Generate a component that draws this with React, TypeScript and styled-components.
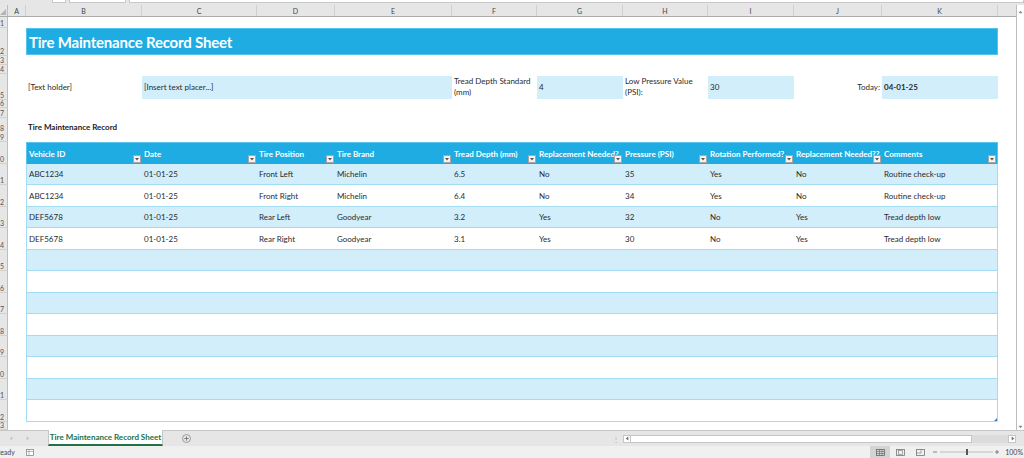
import React from 'react';
import styled, { createGlobalStyle } from 'styled-components';

const GlobalStyle = createGlobalStyle`
  * { box-sizing: border-box; }
  html, body { margin: 0; padding: 0; background: #fff; }
  body { font-family: Lato, "Liberation Sans", sans-serif; }
  #root { width: 1024px; height: 458px; overflow: hidden; }
`;

// row header, A .. L
const COLS = '8px 18px 116px 115px 78px 117px 85px 86px 85px 86px 88px 116px 40px';
const LETTERS = ['A', 'B', 'C', 'D', 'E', 'F', 'G', 'H', 'I', 'J', 'K', 'L'];

const HEADERS = [
  'Vehicle ID',
  'Date',
  'Tire Position',
  'Tire Brand',
  'Tread Depth (mm)',
  'Replacement Needed?',
  'Pressure (PSI)',
  'Rotation Performed?',
  'Replacement Needed??',
  'Comments',
];

const DATA: string[][] = [
  ['ABC1234', '01-01-25', 'Front Left', 'Michelin', '6.5', 'No', '35', 'Yes', 'No', 'Routine check-up'],
  ['ABC1234', '01-01-25', 'Front Right', 'Michelin', '6.4', 'No', '34', 'Yes', 'No', 'Routine check-up'],
  ['DEF5678', '01-01-25', 'Rear Left', 'Goodyear', '3.2', 'Yes', '32', 'No', 'Yes', 'Tread depth low'],
  ['DEF5678', '01-01-25', 'Rear Right', 'Goodyear', '3.1', 'Yes', '30', 'No', 'Yes', 'Tread depth low'],
  ...Array.from({ length: 8 }, () => Array(10).fill('')),
];

const Window = styled.div`
  width: 1024px;
  height: 458px;
  display: flex;
  flex-direction: column;
  overflow: hidden;
  background: #fff;
`;

const FormulaStrip = styled.div`
  height: 5px;
  flex-shrink: 0;
  display: flex;
  background: #e6e6e6;
  padding-left: 52px;
  gap: 3px;
`;

const FormulaBox = styled.div<{ $w?: number }>`
  height: 3px;
  background: #fff;
  border: 1px solid #c8c8c8;
  border-top: none;
  width: ${(p) => (p.$w ? `${p.$w}px` : 'auto')};
  flex: ${(p) => (p.$w ? '0 0 auto' : '1')};
`;

const Main = styled.div`
  height: 425px;
  flex-shrink: 0;
  display: flex;
`;

const Sheet = styled.div`
  flex: 1;
  overflow: hidden;
  display: flex;
  flex-direction: column;
`;

const ColHeadRow = styled.div`
  display: grid;
  grid-template-columns: ${COLS};
  height: 12px;
  flex-shrink: 0;
  background: #e6e6e6;
  border-bottom: 1px solid #ababab;
`;

const SelectAll = styled.div`
  border-right: 1px solid #bdbdbd;
  display: flex;
  align-items: flex-end;
  justify-content: flex-end;
  padding: 0 1px 1px 0;
`;

const ColLetter = styled.div`
  border-right: 1px solid #d0d0d0;
  font-size: 7px;
  color: #444;
  display: flex;
  align-items: center;
  justify-content: center;
  white-space: nowrap;
  overflow: hidden;
`;

const SheetRow = styled.div<{ $h: number }>`
  display: grid;
  grid-template-columns: ${COLS};
  height: ${(p) => p.$h}px;
  flex-shrink: 0;
  color: #2b2b2b;
  font-size: 8px;
`;

const RowHead = styled.div`
  background: #e6e6e6;
  border-right: 1px solid #bdbdbd;
  border-bottom: 1px solid #d0d0d0;
  display: flex;
  justify-content: flex-end;
  align-items: flex-end;
  padding: 0 3px 0 0;
  overflow: hidden;
  font-size: 7px;
  line-height: 7px;
  color: #555;
  white-space: nowrap;
`;

const Gap = styled.div``;

const Banner = styled.div`
  grid-column: 3 / 13;
  margin-bottom: 1px;
  background: #1eace3;
  border: 1px solid #55c2eb;
  color: #fff;
  font-weight: 700;
  font-size: 15px;
  letter-spacing: -0.2px;
  display: flex;
  align-items: center;
  padding-left: 2px;
  white-space: nowrap;
`;

const Cell = styled.div<{ $span?: number; $right?: boolean; $bold?: boolean }>`
  grid-column: span ${(p) => p.$span ?? 1};
  display: flex;
  align-items: center;
  justify-content: ${(p) => (p.$right ? 'flex-end' : 'flex-start')};
  padding: 0 2px;
  white-space: nowrap;
  font-weight: ${(p) => (p.$bold ? 700 : 400)};
  line-height: 11px;
`;

const Fill = styled(Cell)`
  background: #d2eefa;
  margin: 2px 0 1px;
`;

const SectionTitle = styled(Cell)`
  grid-column: 3 / span 3;
  font-weight: 700;
  color: #1a1a1a;
  padding-top: 4px;
`;

const TableHead = styled.div`
  position: relative;
  background: #1eace3;
  color: #fff;
  font-weight: 700;
  display: flex;
  align-items: center;
  padding: 0 2px;
  white-space: nowrap;
  overflow: hidden;
  border-top: 1px solid #5cc3ec;
  &:nth-child(3) {
    border-left: 1px solid #5cc3ec;
  }
  &:last-child {
    border-right: 1px solid #5cc3ec;
  }
`;

const FilterBtn = styled.span`
  position: absolute;
  right: 1px;
  bottom: 1px;
  width: 8px;
  height: 8px;
  border: 1px solid #a6a6a6;
  background: #f4f4f4;
  display: flex;
  align-items: center;
  justify-content: center;
`;

const TableCell = styled.div<{ $band: boolean }>`
  position: relative;
  background: ${(p) => (p.$band ? '#d1eefa' : '#fff')};
  border-bottom: 1px solid #a3dbf3;
  display: flex;
  align-items: center;
  padding: 0 2px;
  white-space: nowrap;
  &:nth-child(3) {
    border-left: 1px solid #a3dbf3;
  }
  &:last-child {
    border-right: 1px solid #a3dbf3;
  }
`;

const ResizeHandle = styled.svg`
  position: absolute;
  right: 0;
  bottom: 0;
`;

const VScroll = styled.div`
  width: 8px;
  flex-shrink: 0;
  border-left: 1px solid #bdbdbd;
  background: #fff;
  display: flex;
  flex-direction: column;
  justify-content: space-between;
  align-items: center;
  padding: 5px 0 1px;
`;

const TabBar = styled.div`
  height: 16px;
  flex-shrink: 0;
  display: flex;
  align-items: stretch;
  background: #e6e6e6;
  border-top: 1px solid #c6c6c6;
`;

const NavArrows = styled.div`
  width: 48px;
  display: flex;
  align-items: center;
  gap: 11px;
  padding-left: 9px;
`;

const SheetTab = styled.div`
  width: 115px;
  margin-top: -1px;
  background: #fff;
  border-left: 1px solid #c6c6c6;
  border-right: 1px solid #c6c6c6;
  border-bottom: 2px solid #217346;
  color: #217346;
  font-weight: 700;
  font-size: 8px;
  display: flex;
  align-items: center;
  justify-content: center;
  white-space: nowrap;
`;

const AddSheet = styled.div`
  width: 28px;
  display: flex;
  align-items: center;
  justify-content: flex-end;
`;

const Splitter = styled.div`
  margin-left: auto;
  width: 14px;
  display: flex;
  align-items: center;
  justify-content: center;
  color: #b0b0b0;
  font-size: 8px;
`;

const HScroll = styled.div`
  width: 393px;
  align-self: center;
  height: 8px;
  display: flex;
  background: #dcdcdc;
`;

const ScrollArrow = styled.div`
  width: 8px;
  background: #fff;
  border: 1px solid #c6c6c6;
  display: flex;
  align-items: center;
  justify-content: center;
`;

const Thumb = styled.div`
  width: 341px;
  background: #fff;
  border: 1px solid #c6c6c6;
  border-left: none;
  margin-right: auto;
`;

const Corner = styled.div`
  width: 8px;
`;

const StatusBar = styled.div`
  height: 12px;
  flex-shrink: 0;
  display: flex;
  align-items: center;
  background: #f0f0f0;
  font-size: 7px;
  color: #444;
`;

const Ready = styled.span`
  margin-left: -4px;
  width: 30px;
`;

const StatusRight = styled.div`
  margin-left: auto;
  display: flex;
  align-items: center;
  height: 100%;
`;

const ViewBtn = styled.div<{ $active?: boolean; $w: number }>`
  width: ${(p) => p.$w}px;
  height: 100%;
  display: flex;
  align-items: center;
  justify-content: center;
  background: ${(p) => (p.$active ? '#d4d4d4' : 'transparent')};
`;

const ZoomLabel = styled.span`
  width: 22px;
  text-align: right;
  padding-right: 1px;
  white-space: nowrap;
`;

const Triangle = ({ dir, color = '#8a8a8a' }: { dir: 'up' | 'down' | 'left' | 'right'; color?: string }) => {
  const d = {
    up: 'M0.5 4 L3 1 L5.5 4 Z',
    down: 'M0.5 2 L3 5 L5.5 2 Z',
    left: 'M4 0.5 L1 3 L4 5.5 Z',
    right: 'M2 0.5 L5 3 L2 5.5 Z',
  }[dir];
  return (
    <svg width="5" height="5" viewBox="0 0 6 6">
      <path d={d} fill={color} />
    </svg>
  );
};

export default function App() {
  return (
    <>
      <GlobalStyle />
      <Window>
        <FormulaStrip>
          <FormulaBox $w={14} />
          <FormulaBox $w={57} />
          <FormulaBox />
        </FormulaStrip>
        <Main>
          <Sheet>
            <ColHeadRow>
              <SelectAll>
                <svg width="6" height="6" viewBox="0 0 6 6">
                  <path d="M6 0 L6 6 L0 6 Z" fill="#b4b4b4" />
                </svg>
              </SelectAll>
              {LETTERS.map((l) => (
                <ColLetter key={l}>{l}</ColLetter>
              ))}
            </ColHeadRow>

            <SheetRow $h={11}>
              <RowHead>1</RowHead>
            </SheetRow>
            <SheetRow $h={28}>
              <RowHead>2</RowHead>
              <Banner>Tire Maintenance Record Sheet</Banner>
            </SheetRow>
            <SheetRow $h={9}>
              <RowHead>3</RowHead>
            </SheetRow>
            <SheetRow $h={9}>
              <RowHead>4</RowHead>
            </SheetRow>
            <SheetRow $h={26}>
              <RowHead>5</RowHead>
              <Gap />
              <Cell>[Text holder]</Cell>
              <Fill $span={3}>[Insert text placer...]</Fill>
              <Cell>
                Tread Depth Standard
                <br />
                (mm)
              </Cell>
              <Fill>4</Fill>
              <Cell>
                Low Pressure Value
                <br />
                (PSI):
              </Cell>
              <Fill>30</Fill>
              <Cell $right>Today:</Cell>
              <Fill $bold>04-01-25</Fill>
            </SheetRow>
            <SheetRow $h={8}>
              <RowHead>6</RowHead>
            </SheetRow>
            <SheetRow $h={10}>
              <RowHead>7</RowHead>
            </SheetRow>
            <SheetRow $h={14}>
              <RowHead>8</RowHead>
              <SectionTitle>Tire Maintenance Record</SectionTitle>
            </SheetRow>
            <SheetRow $h={10}>
              <RowHead>9</RowHead>
            </SheetRow>

            <SheetRow $h={22}>
              <RowHead>10</RowHead>
              <Gap />
              {HEADERS.map((h) => (
                <TableHead key={h}>
                  {h}
                  <FilterBtn>
                    <svg width="4" height="3" viewBox="0 0 4 3">
                      <path d="M0 0 L4 0 L2 2.5 Z" fill="#555" />
                    </svg>
                  </FilterBtn>
                </TableHead>
              ))}
            </SheetRow>

            {DATA.map((row, i) => (
              <SheetRow key={i} $h={i % 2 === 0 ? 21 : 22}>
                <RowHead>{i + 11}</RowHead>
                <Gap />
                {row.map((v, j) => (
                  <TableCell key={j} $band={i % 2 === 0}>
                    {v}
                    {i === DATA.length - 1 && j === row.length - 1 && (
                      <ResizeHandle width="3" height="3" viewBox="0 0 3 3">
                        <path d="M3 0 L3 3 L0 3 Z" fill="#3f7fc2" />
                      </ResizeHandle>
                    )}
                  </TableCell>
                ))}
              </SheetRow>
            ))}

            <SheetRow $h={8}>
              <RowHead>23</RowHead>
            </SheetRow>
          </Sheet>
          <VScroll>
            <Triangle dir="up" />
            <Triangle dir="down" />
          </VScroll>
        </Main>

        <TabBar>
          <NavArrows>
            <Triangle dir="left" color="#c2c2c2" />
            <Triangle dir="right" color="#c2c2c2" />
          </NavArrows>
          <SheetTab>Tire Maintenance Record Sheet</SheetTab>
          <AddSheet>
            <svg width="9" height="9" viewBox="0 0 9 9">
              <circle cx="4.5" cy="4.5" r="4" fill="none" stroke="#8a8a8a" strokeWidth="0.8" />
              <path d="M4.5 2.3 V6.7 M2.3 4.5 H6.7" stroke="#6a6a6a" strokeWidth="0.8" />
            </svg>
          </AddSheet>
          <Splitter>⋮</Splitter>
          <HScroll>
            <ScrollArrow>
              <Triangle dir="left" color="#6a6a6a" />
            </ScrollArrow>
            <Thumb />
            <ScrollArrow>
              <Triangle dir="right" color="#6a6a6a" />
            </ScrollArrow>
          </HScroll>
          <Corner />
        </TabBar>

        <StatusBar>
          <Ready>Ready</Ready>
          <svg width="8" height="7" viewBox="0 0 8 7">
            <rect x="0.5" y="0.5" width="7" height="6" fill="#fff" stroke="#8a8a8a" strokeWidth="0.8" />
            <path d="M0.5 2.5 H7.5 M3 0.5 V6.5" stroke="#8a8a8a" strokeWidth="0.6" />
          </svg>
          <StatusRight>
            <ViewBtn $active $w={20}>
              <svg width="9" height="7" viewBox="0 0 9 7">
                <rect x="0.5" y="0.5" width="8" height="6" fill="none" stroke="#666" strokeWidth="0.8" />
                <path d="M0.5 2.5 H8.5 M0.5 4.5 H8.5 M3.5 0.5 V6.5 M6 0.5 V6.5" stroke="#666" strokeWidth="0.6" />
              </svg>
            </ViewBtn>
            <ViewBtn $w={21}>
              <svg width="9" height="7" viewBox="0 0 9 7">
                <rect x="0.5" y="0.5" width="8" height="6" fill="none" stroke="#777" strokeWidth="0.8" />
                <rect x="2.5" y="1.5" width="4" height="4" fill="none" stroke="#777" strokeWidth="0.6" />
              </svg>
            </ViewBtn>
            <ViewBtn $w={19}>
              <svg width="9" height="7" viewBox="0 0 9 7">
                <rect x="0.5" y="0.5" width="8" height="6" fill="none" stroke="#777" strokeWidth="0.8" />
                <path d="M0.5 4 H5 V0.5" stroke="#777" strokeWidth="0.6" fill="none" />
              </svg>
            </ViewBtn>
            <svg width="72" height="8" viewBox="0 0 72 8">
              <path d="M3 4 H7" stroke="#666" strokeWidth="0.8" />
              <path d="M10 4 H63" stroke="#9a9a9a" strokeWidth="0.6" />
              <rect x="36" y="1" width="2" height="6" fill="#555" />
              <path d="M65 4 H69 M67 2 V6" stroke="#666" strokeWidth="0.8" />
            </svg>
            <ZoomLabel>100%</ZoomLabel>
          </StatusRight>
        </StatusBar>
      </Window>
    </>
  );
}
